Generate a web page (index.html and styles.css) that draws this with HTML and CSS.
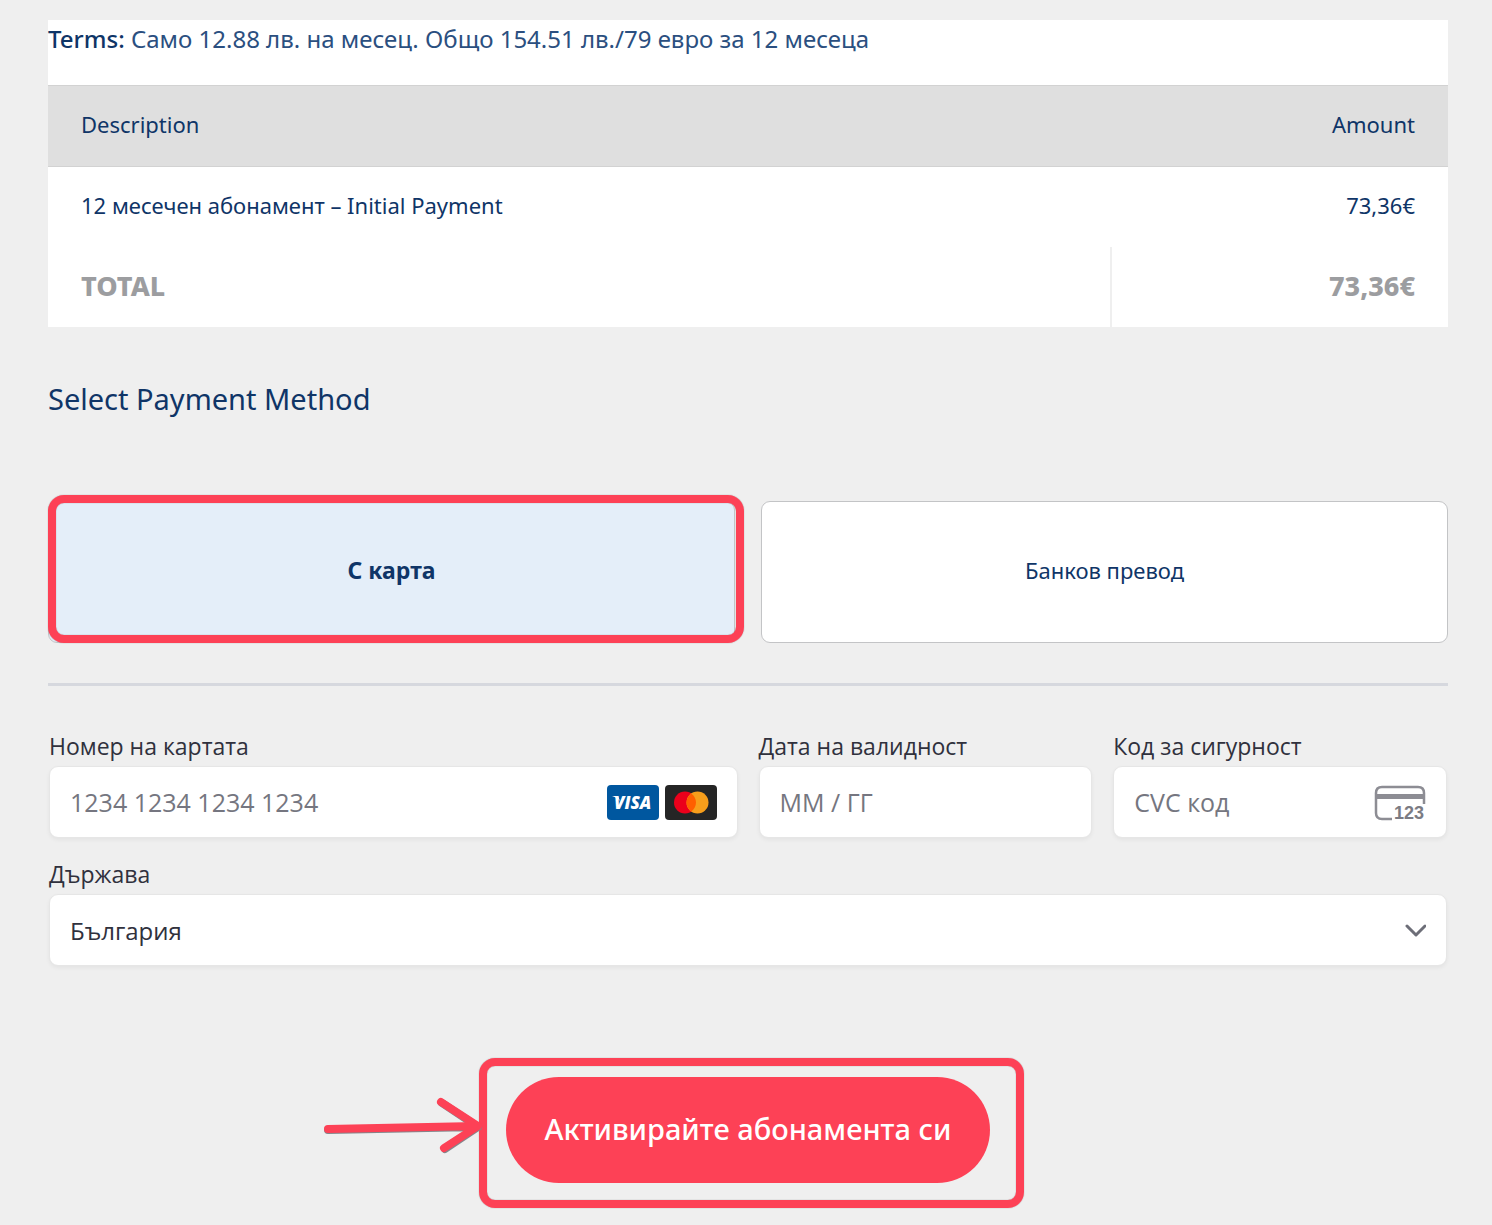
FILE: index.html
```html
<!DOCTYPE html>
<html lang="bg">
  <head>
    <meta charset="utf-8" />
    <title>Select Payment Method</title>
    <meta name="viewport" content="width=device-width, initial-scale=1" />
    <link rel="stylesheet" href="styles.css">
  </head>

  <body>
    <main class="checkout">
      <section class="invoice">
        <p class="terms"><strong>Terms:</strong> Само 12.88 лв. на месец. Общо 154.51 лв./79 евро за 12 месеца</p>
        <table class="summary">
          <thead>
            <tr>
              <th>Description</th>
              <th class="amount">Amount</th>
            </tr>
          </thead>
          <tbody>
            <tr>
              <td>12 месечен абонамент – Initial Payment</td>
              <td class="amount">73,36€</td>
            </tr>
          </tbody>
          <tfoot>
            <tr>
              <th>TOTAL</th>
              <td class="amount">73,36€</td>
            </tr>
          </tfoot>
        </table>
      </section>

      <h2>Select Payment Method</h2>
      <div class="methods">
        <div class="method-wrap">
          <button type="button" class="method selected">С карта</button>
          <span class="marker"></span>
        </div>
        <button type="button" class="method">Банков превод</button>
      </div>

      <form class="payment">
        <div class="fields">
          <div class="field wide">
            <label for="card">Номер на картата</label>
            <div class="box">
              <input id="card" type="text" placeholder="1234 1234 1234 1234">
              <svg class="brand" viewBox="0 0 52 35" role="img" aria-label="Visa">
                <rect width="52" height="35" rx="4" fill="#00579f" />
                <path d="M5 11h6l2 5c-2-2-4-4-8-5z" fill="#fff" />
                <text x="7" y="24" class="visa">VISA</text>
              </svg>
              <svg class="brand" viewBox="0 0 52 35" role="img" aria-label="Mastercard">
                <rect width="52" height="35" rx="4" fill="#252525" />
                <circle cx="20" cy="17.500" r="11" fill="#eb001b" />
                <circle cx="32.500" cy="17.500" r="11" fill="#f79e1b" />
                <path d="M26.250 8.450a11 11 0 0 1 0 18.100a11 11 0 0 1 0-18.100z" fill="#ff5f00" />
              </svg>
            </div>
          </div>
          <div class="field">
            <label for="expiry">Дата на валидност</label>
            <div class="box">
              <input id="expiry" type="text" placeholder="ММ / ГГ">
            </div>
          </div>
          <div class="field">
            <label for="cvc">Код за сигурност</label>
            <div class="box">
              <input id="cvc" type="text" placeholder="CVC код">
              <svg class="cvc" viewBox="0 0 52 40" aria-hidden="true">
                <path d="M18 37H8q-6 0-6-6V11q0-6 6-6h36q6 0 6 6v11" fill="none" stroke="#8d8d94" stroke-width="2.500" />
                <path d="M2 12h48v5H2z" fill="#8d8d94" />
                <text x="20" y="37" class="digits">123</text>
              </svg>
            </div>
          </div>
          <div class="field full">
            <label for="country">Държава</label>
            <div class="box">
              <select id="country">
                <option>България</option>
              </select>
              <svg class="chevron" viewBox="0 0 22 14" aria-hidden="true">
                <path d="M3 3l9 9 9-9" fill="none" stroke="#6d6e78" stroke-width="3" stroke-linecap="round" stroke-linejoin="round" />
              </svg>
            </div>
          </div>
        </div>

        <div class="submit-wrap">
          <button type="submit" class="submit">Активирайте абонамента си</button>
          <span class="marker"></span>
          <svg class="arrow" viewBox="0 0 160 60" aria-hidden="true">
            <path d="M5 34L154 31M119 7L155 31L122 53" fill="none" stroke="#85858a" stroke-width="8" stroke-linecap="round" stroke-linejoin="round" />
            <path d="M5 33L154 30M118 6L155 30L121 52" fill="none" stroke="#fd4156" stroke-width="8" stroke-linecap="round" stroke-linejoin="round" />
          </svg>
        </div>
      </form>
    </main>
  </body>
</html>
```
FILE: styles.css
```css
* {
  box-sizing: border-box;
}

body {
  margin: 0;
  background: #efefef;
  color: #0f3567;
  font-family: "Noto Sans", sans-serif;
}

.checkout {
  padding: 20px 44px 42px 48px;
}

.invoice {
  background: #fff;
}

.terms {
  margin: 0;
  min-height: 65px;
  color: #2b4f80;
  font-size: 24px;
  line-height: 38px;
  font-weight: 400;
}

.terms strong {
  color: #0f3567;
  font-weight: 500;
}

.summary {
  width: 100%;
  border-spacing: 0;
  font-size: 22px;
}

.summary th,
.summary td {
  height: 80px;
  padding: 0 33px 4px;
  text-align: left;
  font-weight: 400;
}

.summary thead th {
  height: 82px;
  background: #dfdfdf;
  border-top: 1px solid #d2d2d2;
  border-bottom: 1px solid #d2d2d2;
}

.summary .amount {
  width: 338px;
  text-align: right;
}

.summary tfoot th,
.summary tfoot td {
  color: #9c9da0;
  font-size: 27px;
  font-weight: 800;
}

.summary tfoot .amount {
  border-left: 2px solid #efefef;
}

h2 {
  margin: 52px 0 82px;
  font-size: 29px;
  line-height: 40px;
  font-weight: 400;
}

.methods {
  display: grid;
  grid-template-columns: 1fr 1fr;
  gap: 26px;
  padding-bottom: 40px;
  border-bottom: 3px solid #d6d8de;
}

.method-wrap {
  position: relative;
}

.method {
  width: 100%;
  height: 142px;
  padding: 0 0 4px;
  border: 1px solid #c3c4c6;
  border-radius: 9px;
  background: #fff;
  color: #0f3567;
  font-family: inherit;
  font-size: 22px;
}

.method.selected {
  background: #e4eef9;
  font-size: 23px;
  font-weight: 700;
}

/* red frame round the thing to click */
.marker {
  position: absolute;
  inset: -6px -9px 0 0;
  border: 8px solid #fd4156;
  border-radius: 16px;
  box-shadow: 0 0 1px #777, inset 0 0 1px #777;
  pointer-events: none;
}

.fields {
  display: grid;
  grid-template-columns: repeat(4, minmax(0, 1fr));
  column-gap: 21px;
  row-gap: 20px;
  margin: 44px 1px 0;
  color: #30313d;
  font-family: "Open Sans", sans-serif;
}

.wide {
  grid-column: span 2;
}

.full {
  grid-column: 1 / -1;
}

.field label {
  display: block;
  height: 36px;
  font-size: 23px;
  line-height: 32px;
}

.box {
  display: flex;
  align-items: center;
  gap: 6px;
  height: 72px;
  padding: 0 20px;
  background: #fff;
  border: 1px solid #e6e6e6;
  border-radius: 9px;
  box-shadow: 0 2px 4px rgba(0, 0, 0, 0.05);
}

.box input,
.box select {
  flex: 1;
  min-width: 0;
  height: 100%;
  padding: 0;
  border: none;
  outline: none;
  background: none;
  color: #30313d;
  font-family: inherit;
  font-size: 25px;
  appearance: none;
}

.box select {
  font-size: 24px;
}

.box input::placeholder {
  color: #757680;
  opacity: 1;
}

.brand {
  width: 52px;
  height: 35px;
}

.visa {
  fill: #fff;
  font: italic 800 17px "Open Sans", sans-serif;
}

.cvc {
  width: 52px;
  height: 40px;
  overflow: visible;
}

.digits {
  fill: #7b7b83;
  font: 700 18px "Liberation Sans", sans-serif;
}

.chevron {
  width: 22px;
  height: 14px;
}

.submit-wrap {
  position: relative;
  width: 484px;
  margin: 111px auto 0;
}

.submit-wrap .marker {
  inset: -19px -34px -25px -27px;
}

.submit {
  width: 100%;
  height: 106px;
  padding: 0 0 4px;
  border: none;
  border-radius: 53px;
  background: #fd4156;
  color: #fff;
  font-family: inherit;
  font-size: 29px;
  font-weight: 500;
  white-space: nowrap;
}

.arrow {
  position: absolute;
  top: 19px;
  right: 100%;
  width: 160px;
  height: 60px;
  margin-right: 23px;
}

@media (max-width: 800px) {
  .methods,
  .fields {
    grid-template-columns: 1fr;
  }

  .wide {
    grid-column: auto;
  }

  .arrow {
    display: none;
  }
}
```
